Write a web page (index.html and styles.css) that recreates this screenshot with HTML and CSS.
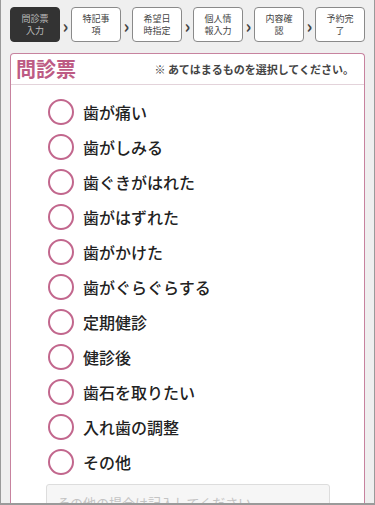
FILE: index.html
```html
<!DOCTYPE html>
<html lang="ja">
<head>
    <meta charset="UTF-8">
    <meta name="viewport" content="width=device-width, initial-scale=1.0">
    <title>問診票</title>
    <link rel="stylesheet" href="styles.css">
</head>
<body>
    <div class="frame">
        <ol class="steps">
            <li class="step current">問診票<br>入力</li>
            <li class="arrow">&rsaquo;</li>
            <li class="step">特記事<br>項</li>
            <li class="arrow">&rsaquo;</li>
            <li class="step">希望日<br>時指定</li>
            <li class="arrow">&rsaquo;</li>
            <li class="step">個人情<br>報入力</li>
            <li class="arrow">&rsaquo;</li>
            <li class="step">内容確<br>認</li>
            <li class="arrow">&rsaquo;</li>
            <li class="step">予約完<br>了</li>
        </ol>

        <div class="panel">
            <div class="panel-head">
                <h1 class="panel-title">問診票</h1>
                <p class="panel-note">※ あてはまるものを選択してください。</p>
            </div>
            <ul class="options">
                <li class="option"><span class="radio"></span>歯が痛い</li>
                <li class="option"><span class="radio"></span>歯がしみる</li>
                <li class="option"><span class="radio"></span>歯ぐきがはれた</li>
                <li class="option"><span class="radio"></span>歯がはずれた</li>
                <li class="option"><span class="radio"></span>歯がかけた</li>
                <li class="option"><span class="radio"></span>歯がぐらぐらする</li>
                <li class="option"><span class="radio"></span>定期健診</li>
                <li class="option"><span class="radio"></span>健診後</li>
                <li class="option"><span class="radio"></span>歯石を取りたい</li>
                <li class="option"><span class="radio"></span>入れ歯の調整</li>
                <li class="option"><span class="radio"></span>その他</li>
            </ul>
            <textarea class="other" placeholder="その他の場合は記入してください"></textarea>
        </div>
    </div>
</body>
</html>
```

FILE: styles.css
```css
body {
    margin: 0;
    padding: 0;
    font-family: "Noto Sans CJK JP", "Noto Sans", sans-serif;
    background-color: #fff;
}

.frame {
    width: 375px;
    height: 505px;
    box-sizing: border-box;
    border-left: 1px solid #9a9a9a;
    border-right: 1px solid #9a9a9a;
    border-bottom: 2px solid #9a9a9a;
    background-color: #efefef;
    padding: 7px 9px 0 9px;
    overflow: hidden;
}

/* step bar */
.steps {
    list-style: none;
    margin: 0;
    padding: 0;
    display: flex;
    align-items: center;
    justify-content: space-between;
}

.step {
    width: 50px;
    height: 35px;
    box-sizing: border-box;
    border: 1px solid #8a8a8a;
    border-radius: 4px;
    background-color: #fff;
    color: #444;
    font-size: 9px;
    line-height: 12px;
    text-align: center;
    display: flex;
    align-items: center;
    justify-content: center;
}

.step.current {
    background-color: #333;
    border-color: #333;
    color: #bbb;
}

.arrow {
    color: #444;
    font-size: 18px;
    font-weight: bold;
    line-height: 1;
}

/* panel */
.panel {
    margin-top: 11px;
    background-color: #fff;
    border: 1px solid #c7839f;
    border-bottom: none;
    border-radius: 4px 4px 0 0;
    height: 460px;
}

.panel-head {
    display: flex;
    align-items: center;
    justify-content: space-between;
    height: 30px;
    padding: 0 10px 0 5px;
    border-bottom: 1px solid #e3d3da;
}

.panel-title {
    margin: 0;
    font-size: 20px;
    font-weight: bold;
    color: #bd5b84;
    line-height: 1;
}

.panel-note {
    margin: 0;
    font-size: 11px;
    font-weight: bold;
    color: #444;
}

.options {
    list-style: none;
    margin: 0;
    padding: 9px 0 0 37px;
}

.option {
    display: flex;
    align-items: center;
    height: 35px;
    font-size: 16px;
    font-weight: 500;
    color: #222;
}

.radio {
    width: 22px;
    height: 22px;
    border: 2px solid #c2678d;
    border-radius: 50%;
    margin-right: 9px;
    flex-shrink: 0;
}

.other {
    display: block;
    margin: 5px 0 0 35px;
    width: 284px;
    height: 40px;
    box-sizing: border-box;
    background-color: #f6f6f6;
    border: 1px solid #ddd;
    border-radius: 3px;
    padding: 8px 10px;
    font-family: inherit;
    font-size: 13px;
    resize: none;
}

.other::placeholder {
    color: #c4c4c4;
}
```
